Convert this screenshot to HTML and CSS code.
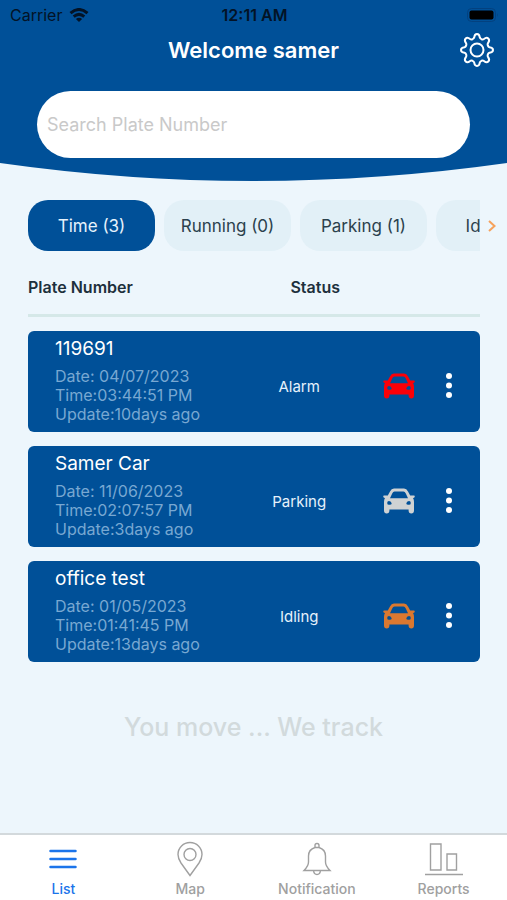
FILE: index.html
```
<!DOCTYPE html>
<html lang="en">
<head>
    <meta charset="UTF-8">
    <meta name="viewport" content="width=device-width, initial-scale=1.0">
    <title>Vehicle List</title>
    <link rel="stylesheet" href="styles.css">
</head>
<body>
    <!-- shared car shape, coloured per row -->
    <svg class="sprite" aria-hidden="true">
        <symbol id="car" viewBox="0 0 32 26">
            <path fill-rule="evenodd" d="M11 .6H21Q23.600 .8 25 3.400L27.200 7.400H31Q32 7.500 31.700 8.700Q31.400 9.900 30 10.100Q31 11.500 31 14V22.500Q31 25.500 28.300 25.500Q25.600 25.500 25.600 22.500V21.500H6.400V22.500Q6.400 25.500 3.700 25.500Q1 25.500 1 22.500V14Q1 11.500 2 10.100Q.6 9.900 .3 8.700Q0 7.500 1 7.400H4.800L7 3.400Q8.400 .8 11 .6ZM11.500 3.600Q10.100 3.800 9.200 5.400L7 10.200H25L22.800 5.400Q21.900 3.800 20.500 3.600ZM6 13Q4.200 13 4.200 14.900Q4.200 16.800 6 16.800Q8.700 17 8.700 15.600Q8.400 13.200 6 13ZM26 13Q27.800 13 27.800 14.900Q27.800 16.800 26 16.800Q23.300 17 23.300 15.600Q23.600 13.200 26 13Z"/>
        </symbol>
        <symbol id="dots" viewBox="0 0 6 26">
            <circle cx="3" cy="3" r="3"/>
            <circle cx="3" cy="12.500" r="3"/>
            <circle cx="3" cy="22" r="3"/>
        </symbol>
    </svg>

    <header class="header">
        <div class="status-bar">
            <span class="carrier">Carrier
                <svg class="wifi" viewBox="0 0 20 14" aria-hidden="true">
                    <path d="M1.500 5.200Q10 -2.200 18.500 5.200M4.700 8.600Q10 4.200 15.300 8.600"/>
                    <path class="wifi-dot" d="M10 14L6.900 11Q10 8.600 13.100 11Z"/>
                </svg>
            </span>
            <span class="clock">12:11 AM</span>
            <span class="battery-wrap">
                <svg class="battery" viewBox="0 0 32 16" aria-hidden="true">
                    <rect class="battery-case" x="0.500" y="1.500" width="28" height="13" rx="4"/>
                    <rect x="2.500" y="3.500" width="24" height="9" rx="2"/>
                    <path d="M30 6Q31.500 8 30 10Z" class="battery-tip"/>
                </svg>
            </span>
        </div>
        <div class="title-bar">
            <h1>Welcome samer</h1>
            <button class="settings" type="button" aria-label="Settings">
                <svg viewBox="0 0 34 34" aria-hidden="true">
                    <path d="M14.200 4.500Q14.600 1 17 1Q19.400 1 19.800 4.500Q20.100 5.600 21.500 6.200Q22.900 6.700 23.900 6Q26.600 3.800 28.300 5.500Q30.100 7.300 28 10.100Q27.300 11.100 27.800 12.500Q28.400 13.900 29.500 14.200Q33 14.600 33 17Q33 19.400 29.500 19.800Q28.400 20.100 27.800 21.500Q27.300 22.900 28 23.900Q30.100 26.700 28.300 28.500Q26.600 30.200 23.900 28Q22.900 27.300 21.500 27.800Q20.100 28.400 19.800 29.500Q19.400 33 17 33Q14.600 33 14.200 29.500Q13.900 28.400 12.500 27.800Q11.100 27.300 10.100 28Q7.400 30.200 5.700 28.500Q3.900 26.700 6 23.900Q6.700 22.900 6.200 21.500Q5.600 20.100 4.500 19.800Q1 19.400 1 17Q1 14.600 4.500 14.200Q5.600 13.900 6.200 12.500Q6.700 11.100 6 10.100Q3.900 7.300 5.700 5.500Q7.400 3.800 10.100 6Q11.100 6.700 12.500 6.200Q13.900 5.600 14.200 4.500Z"/>
                    <circle cx="17" cy="17" r="6.500"/>
                </svg>
            </button>
        </div>
        <input class="search" type="text" placeholder="Search Plate Number" aria-label="Search Plate Number">
    </header>
    <svg class="curve" viewBox="0 0 507 18" preserveAspectRatio="none" aria-hidden="true">
        <path d="M0 0Q253.500 36 507 0Z"/>
    </svg>

    <main>
        <div class="filters">
            <div class="tabs">
                <button class="tab active" type="button">Time (3)</button>
                <button class="tab" type="button">Running (0)</button>
                <button class="tab" type="button">Parking (1)</button>
                <button class="tab" type="button">Idling (1)</button>
            </div>
            <button class="next" type="button" aria-label="More filters">
                <svg viewBox="0 0 8 12" aria-hidden="true"><path d="M1 1L6.500 6L1 11"/></svg>
            </button>
        </div>

        <table class="vehicles">
            <thead>
                <tr>
                    <th class="col-plate">Plate Number</th>
                    <th class="col-status">Status</th>
                    <th class="col-car"></th>
                    <th class="col-menu"></th>
                </tr>
            </thead>
            <tbody>
                <tr>
                    <td class="plate">
                        <h2>119691</h2>
                        <p>Date: 04/07/2023</p>
                        <p>Time:03:44:51 PM</p>
                        <p>Update:10days ago</p>
                    </td>
                    <td class="status">Alarm</td>
                    <td class="car alarm"><svg aria-hidden="true"><use href="#car"/></svg></td>
                    <td class="menu"><button type="button" aria-label="Options for 119691"><svg aria-hidden="true"><use href="#dots"/></svg></button></td>
                </tr>
                <tr>
                    <td class="plate">
                        <h2>Samer Car</h2>
                        <p>Date: 11/06/2023</p>
                        <p>Time:02:07:57 PM</p>
                        <p>Update:3days ago</p>
                    </td>
                    <td class="status">Parking</td>
                    <td class="car parking"><svg aria-hidden="true"><use href="#car"/></svg></td>
                    <td class="menu"><button type="button" aria-label="Options for Samer Car"><svg aria-hidden="true"><use href="#dots"/></svg></button></td>
                </tr>
                <tr>
                    <td class="plate">
                        <h2>office test</h2>
                        <p>Date: 01/05/2023</p>
                        <p>Time:01:41:45 PM</p>
                        <p>Update:13days ago</p>
                    </td>
                    <td class="status">Idling</td>
                    <td class="car idling"><svg aria-hidden="true"><use href="#car"/></svg></td>
                    <td class="menu"><button type="button" aria-label="Options for office test"><svg aria-hidden="true"><use href="#dots"/></svg></button></td>
                </tr>
            </tbody>
        </table>

        <p class="slogan">You move ... We track</p>
    </main>

    <nav class="bottom-nav">
        <a href="#list" class="active">
            <svg viewBox="0 0 40 36" aria-hidden="true"><path class="bars" d="M7.500 10H32.500M7.500 18H32.500M7.500 26H32.500"/></svg>
            List
        </a>
        <a href="#map">
            <svg viewBox="0 0 40 36" aria-hidden="true"><path d="M20 34.500Q18.500 32.500 11 22Q8 17.500 8 13.500A12 12 0 0 1 32 13.500Q32 17.500 29 22Q21.500 32.500 20 34.500Z"/><circle cx="20" cy="13.500" r="6"/></svg>
            Map
        </a>
        <a href="#notification">
            <svg viewBox="0 0 40 36" aria-hidden="true"><path d="M18 6.500V4.500Q18 2.500 20 2.500Q22 2.500 22 4.500V6.500Q28.500 8.500 28.500 15V21Q28.500 25 33 29.500H7Q11.500 25 11.500 21V15Q11.500 8.500 18 6.500ZM18 6.500H22M16.500 29.500Q17 33.500 20 33.500Q23 33.500 23.500 29.500"/></svg>
            Notification
        </a>
        <a href="#reports">
            <svg viewBox="0 0 40 36" aria-hidden="true"><path d="M6.500 3H17V29H6.500ZM23 13H32.500V29H23ZM1 33.500H39"/></svg>
            Reports
        </a>
    </nav>
</body>
</html>
```
FILE: styles.css
```
* {
    box-sizing: border-box;
}
body {
    display: flex;
    flex-direction: column;
    min-height: 100vh;
    margin: 0;
    font-family: Inter, "Liberation Sans", sans-serif;
    background-color: #edf6fc;
    color: #1d303c;
}
h1, h2, p {
    margin: 0;
}
button {
    padding: 0;
    border: none;
    background: none;
    font-family: inherit;
    cursor: pointer;
}
svg {
    display: block;
}
.sprite {
    position: absolute;
    width: 0;
    height: 0;
}

/* Header */
.header {
    display: flex;
    flex-direction: column;
    padding-bottom: 5px;
    background-color: #005098;
}
.status-bar {
    display: grid;
    grid-template-columns: 1fr auto 1fr;
    align-items: center;
    height: 30px;
    padding: 0 8px 0 10px;
    font-size: 16px;
    color: #031326;
}
.carrier {
    display: flex;
    align-items: center;
    gap: 7px;
}
.wifi {
    width: 20px;
    height: 14px;
    fill: none;
    stroke: #031326;
    stroke-width: 3;
}
.wifi-dot {
    fill: #031326;
    stroke: none;
}
.clock {
    font-weight: 600;
}
.battery-wrap {
    justify-self: end;
}
.battery {
    width: 32px;
    height: 16px;
}
.battery-case {
    fill: none;
    stroke: #03417f;
}
.battery-tip {
    fill: #03417f;
}
.title-bar {
    display: grid;
    grid-template-columns: 1fr auto 1fr;
    align-items: center;
    height: 40px;
    padding: 0 13px;
}
.title-bar h1 {
    grid-column: 2;
    font-size: 22px;
    font-weight: 600;
    color: #fff;
}
.settings {
    justify-self: end;
}
.settings svg {
    width: 34px;
    height: 34px;
    fill: none;
    stroke: #fff;
    stroke-width: 2;
}
.search {
    height: 67px;
    margin: 21px 37px 0;
    padding: 0 10px;
    border: none;
    border-radius: 34px;
    background-color: #fff;
    font-family: inherit;
    font-size: 18px;
    color: #1d303c;
}
.search::placeholder {
    color: #c9c9c9;
}
.curve {
    width: 100%;
    height: 18px;
    fill: #005098;
}

/* Filter tabs */
.filters {
    display: flex;
    padding: 19px 0 0 28px;
}
.tabs {
    display: flex;
    flex: 1;
    gap: 9px;
    min-width: 0;
    overflow: hidden;
}
.tab {
    flex: none;
    width: 127px;
    height: 51px;
    border-radius: 20px;
    background-color: #e2f0f7;
    font-size: 17px;
    color: #2b414d;
}
.tab.active {
    background-color: #005098;
    color: #e6f2fc;
}
.next {
    width: 27px;
    padding-left: 8px;
}
.next svg {
    width: 8px;
    height: 12px;
    fill: none;
    stroke: #f6a25c;
    stroke-width: 2;
}

/* Vehicle table */
.vehicles {
    width: calc(100% - 55px);
    margin: 8px 27px 0 28px;
    border-collapse: separate;
    border-spacing: 0 14px;
    table-layout: fixed;
}
.vehicles th {
    height: 44px;
    padding: 0 0 14px;
    border-bottom: 3px solid #d5e8e8;
    font-size: 16px;
    font-weight: 600;
    text-align: left;
}
.col-plate {
    width: 47%;
}
.col-status {
    width: 26%;
}
.vehicles .col-status {
    padding-left: 50px;
}
.col-car {
    width: 18%;
}
.vehicles td {
    padding: 9px 0 0;
    background-color: #005098;
}
.vehicles td:first-child {
    border-radius: 6px 0 0 6px;
}
.vehicles td:last-child {
    border-radius: 0 6px 6px 0;
}
.vehicles .plate {
    padding: 6px 0 8px 27px;
}
.plate h2 {
    margin-bottom: 6px;
    font-size: 19px;
    font-weight: 400;
    line-height: 24px;
    color: #fff;
}
.plate p {
    font-size: 16px;
    line-height: 19px;
    color: #78a8d2;
}
.status {
    font-size: 15px;
    text-align: center;
    color: #e6f2fc;
}
.car svg {
    width: 32px;
    height: 26px;
    margin: 0 auto;
}
.alarm {
    fill: #fb0007;
}
.parking {
    fill: #cfd2d3;
}
.idling {
    fill: #da7830;
}
.menu button {
    display: block;
}
.menu svg {
    width: 20px;
    height: 26px;
    fill: #fff;
}

.slogan {
    margin-top: 36px;
    font-size: 25px;
    font-weight: 500;
    line-height: 30px;
    text-align: center;
    color: #d2dadc;
}

/* Bottom navigation */
.bottom-nav {
    display: flex;
    margin-top: auto;
    border-top: 2px solid #d3d9dc;
    background-color: #fff;
}
.bottom-nav a {
    display: flex;
    flex: 1;
    flex-direction: column;
    align-items: center;
    gap: 3px;
    padding: 6px 0 2px;
    font-size: 14px;
    font-weight: 500;
    line-height: 18px;
    text-decoration: none;
    color: #a0a0a0;
}
.bottom-nav svg {
    width: 40px;
    height: 36px;
    fill: none;
    stroke: #a0a0a0;
    stroke-width: 1.4;
}
.bottom-nav .active {
    color: #1b74ea;
}
.bottom-nav .bars {
    stroke: #1b74ea;
    stroke-width: 2.5;
    stroke-linecap: round;
}
```
